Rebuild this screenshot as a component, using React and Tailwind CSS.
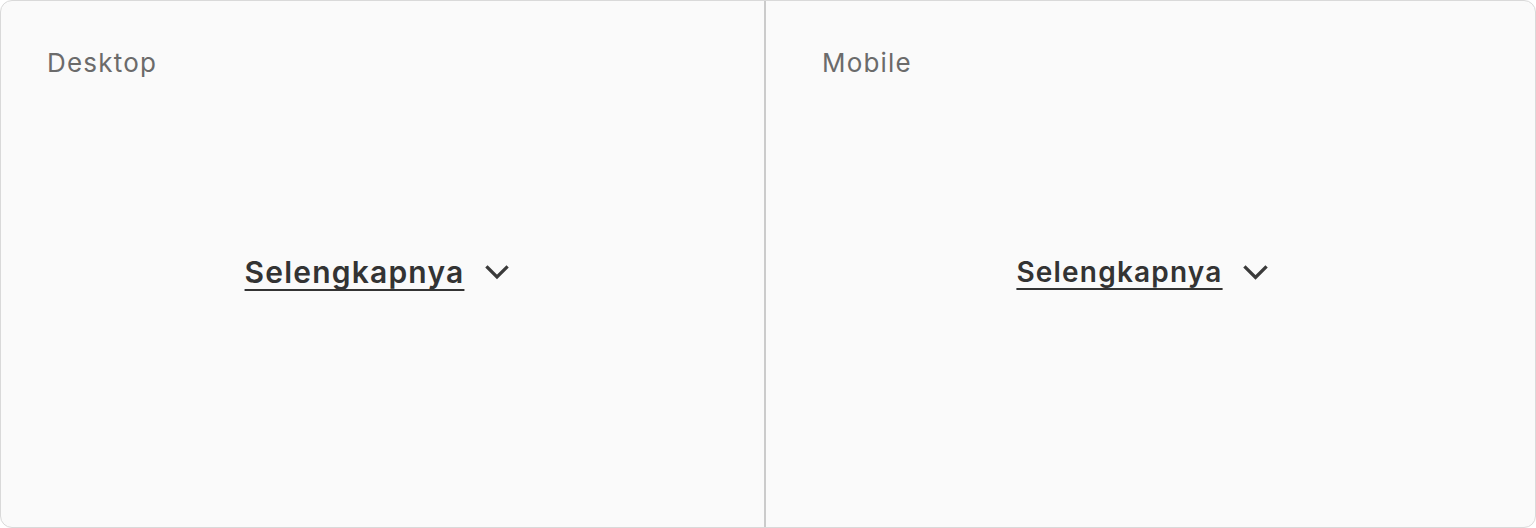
export default function App() {
  const Chevron = ({ w }) => (
    <svg width={w} height={w * 0.65} viewBox="0 0 24 15.6" fill="none" className="shrink-0">
      <path d="M2.5 2.5 L12 12 L21.5 2.5" stroke="#3a3a3a" strokeWidth="3.2" strokeLinecap="square" strokeLinejoin="miter" />
    </svg>
  );
  return (
    <div className="w-[1536px] h-[528px] bg-white" style={{ fontFamily: "Inter, 'Noto Sans', sans-serif" }}>
      <div className="flex h-[528px] w-[1536px] overflow-hidden rounded-[12px] border border-[#d9d9d9] bg-[#fafafa]">
        <div className="flex w-[765px] shrink-0 flex-col border-r-2 border-[#cbcbcb]">
          <div className="pl-[46px] pt-[44px] text-[26px] leading-[36px] tracking-[1.2px] text-[#6b6b6b]">Desktop</div>
          <div className="flex flex-1 items-center justify-center pb-[64px] pr-[11px]">
            <span className="text-[30px] font-semibold leading-[40px] tracking-[1.2px] text-[#333333] underline decoration-2 underline-offset-[6px]">Selengkapnya</span>
            <span className="ml-[21px] mt-[2px] flex">
              <Chevron w={24} />
            </span>
          </div>
        </div>
        <div className="flex flex-1 flex-col">
          <div className="pl-[56px] pt-[44px] text-[26px] leading-[36px] tracking-[1.2px] text-[#6b6b6b]">Mobile</div>
          <div className="flex flex-1 items-center justify-center pb-[64px] pr-[17px]">
            <span className="text-[28px] font-semibold leading-[40px] tracking-[1.2px] text-[#333333] underline decoration-2 underline-offset-[6px]">Selengkapnya</span>
            <span className="ml-[20px] mt-[2px] flex">
              <Chevron w={25} />
            </span>
          </div>
        </div>
      </div>
    </div>
  );
}
